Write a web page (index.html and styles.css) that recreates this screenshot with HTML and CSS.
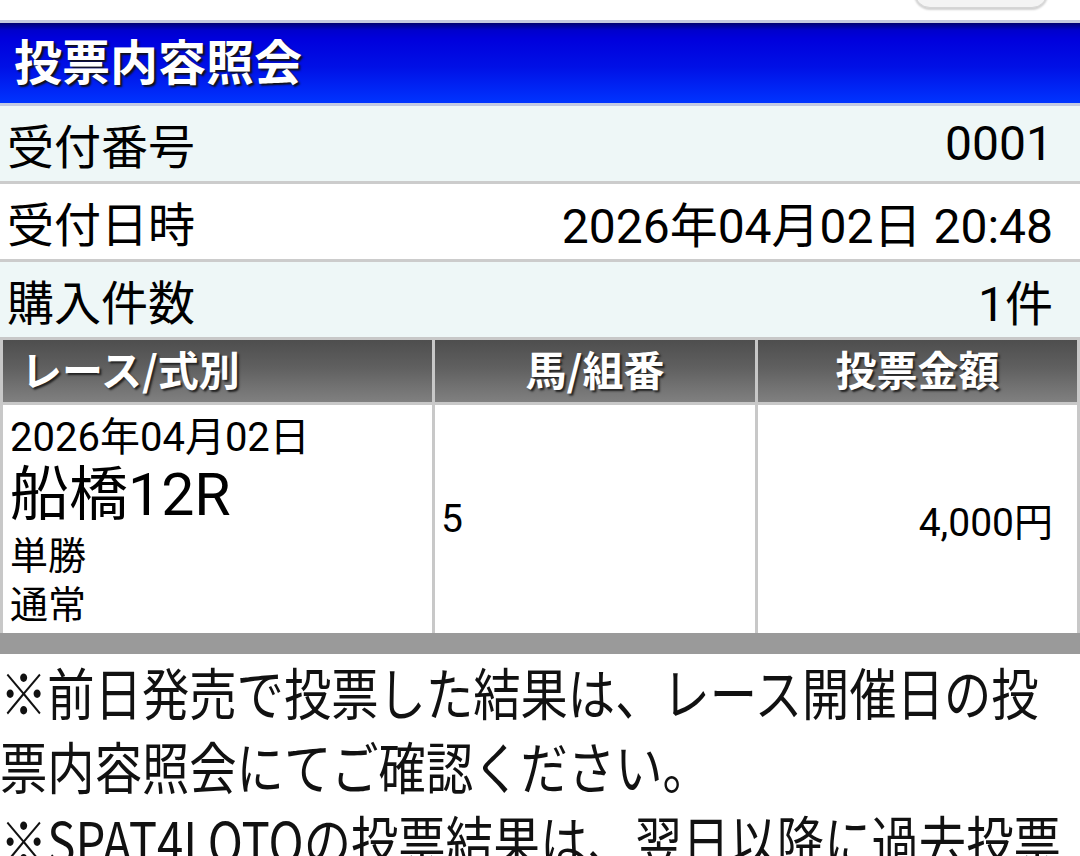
FILE: index.html
```html
<!DOCTYPE html>
<html lang="ja">
<head>
<meta charset="utf-8">
<title>投票内容照会</title>
<link rel="stylesheet" href="styles.css">
</head>
<body>
<div class="topbar"><div class="topbtn"></div></div>
<h1 class="title">投票内容照会</h1>
<div class="info">
  <div class="info-row alt"><span class="label">受付番号</span><span class="value">0001</span></div>
  <div class="info-row"><span class="label">受付日時</span><span class="value">2026年04月02日 20:48</span></div>
  <div class="info-row alt"><span class="label">購入件数</span><span class="value">1件</span></div>
</div>
<table class="bets">
  <colgroup><col class="c1"><col class="c2"><col class="c3"></colgroup>
  <thead>
    <tr><th class="left">レース/式別</th><th>馬/組番</th><th>投票金額</th></tr>
  </thead>
  <tbody>
    <tr>
      <td class="race">
        <div class="race-date">2026年04月02日</div>
        <div class="race-name">船橋12R</div>
        <div class="race-sub">単勝</div>
        <div class="race-sub">通常</div>
      </td>
      <td class="num">5</td>
      <td class="amt">4,000円</td>
    </tr>
  </tbody>
</table>
<div class="bar"></div>
<div class="notes">
  <p class="note">※前日発売で投票した結果は、レース開催日の投<br>票内容照会にてご確認ください。</p>
  <p class="note">※SPAT4LOTOの投票結果は、翌日以降に過去投票<br>内容照会にてご確認ください。</p>
</div>
</body>
</html>
```
FILE: styles.css
```css
html, body {
  margin: 0;
  padding: 0;
  background: #ffffff;
  overflow: hidden;
}
body {
  width: 1080px;
  height: 856px;
  font-family: Roboto, "Noto Sans CJK JP", sans-serif;
  color: #000;
}
.topbar {
  height: 20px;
  display: flex;
  justify-content: flex-end;
  overflow: hidden;
}
.topbtn {
  width: 132px;
  height: 40px;
  margin-top: -34px;
  margin-right: 32px;
  border-radius: 16px;
  background: #f4f4f4;
  border: 1px solid #d6d6d6;
  box-shadow: 0 2px 2px rgba(0,0,0,0.18);
}
.title {
  margin: 0;
  height: 74px;
  padding: 0 0 6px 14px;
  box-sizing: content-box;
  border-top: 3px solid #c4c8de;
  border-bottom: 3px solid #c2cae2;
  background: linear-gradient(to bottom, #000070 0%, #0000cc 9%, #0000dd 20%, #0010e6 55%, #0034ff 100%);
  color: #fff;
  font-family: "Noto Sans CJK JP", sans-serif;
  font-weight: 700;
  font-size: 48px;
  line-height: 72px;
  text-shadow: 2px 2px 2px #111;
}
.info-row {
  height: 75px;
  display: flex;
  justify-content: space-between;
  align-items: center;
  padding: 0 27px 0 7px;
  background: #ffffff;
  border-bottom: 3px solid #cccccc;
  font-size: 48px;
}
.info-row:last-child { border-bottom: none; }
.info-row.alt { background: #eef7f7; }
.label {
  font-family: "Noto Sans CJK JP", sans-serif;
  font-size: 47px;
}
.value {
  font-family: Roboto, "Noto Sans CJK JP", sans-serif;
}
.bets {
  width: 1080px;
  border-collapse: separate;
  border-spacing: 3px;
  background: #c8c8c8;
  table-layout: fixed;
}
.c1 { width: 429px; }
.c2 { width: 320px; }
.c3 { width: 319px; }
.bets th {
  height: 56px;
  padding: 0 0 6px 0;
  background: linear-gradient(to bottom, #4e4e4e 0%, #606060 45%, #808080 100%);
  color: #fff;
  font-family: "Noto Sans CJK JP", sans-serif;
  font-weight: 700;
  font-size: 41px;
  line-height: 56px;
  text-align: center;
  text-shadow: 2px 2px 2px #222;
}
.bets th.left {
  text-align: left;
  padding-left: 18px;
}
.bets td {
  height: 228px;
  padding: 0;
  background: #fff;
  vertical-align: middle;
  font-size: 39px;
}
.race {
  padding-left: 7px !important;
}
.race-date {
  font-size: 40px;
  line-height: 49px;
}
.race-name {
  font-size: 59px;
  line-height: 66px;
}
.race-sub {
  font-family: "Noto Sans CJK JP", sans-serif;
  font-size: 38px;
  line-height: 49px;
}
.num {
  padding-left: 6px !important;
}
.amt {
  text-align: right;
  padding-right: 24px !important;
}
.bar {
  height: 21px;
  margin-top: -3px;
  background: #9a9a9a;
}
.notes {
  width: 1280px;
  transform: scaleX(0.845);
  transform-origin: left top;
}
.note {
  margin: 0;
  font-family: "Noto Sans CJK JP", sans-serif;
  font-size: 56px;
  line-height: 74px;
  color: #111;
  white-space: nowrap;
}
```
